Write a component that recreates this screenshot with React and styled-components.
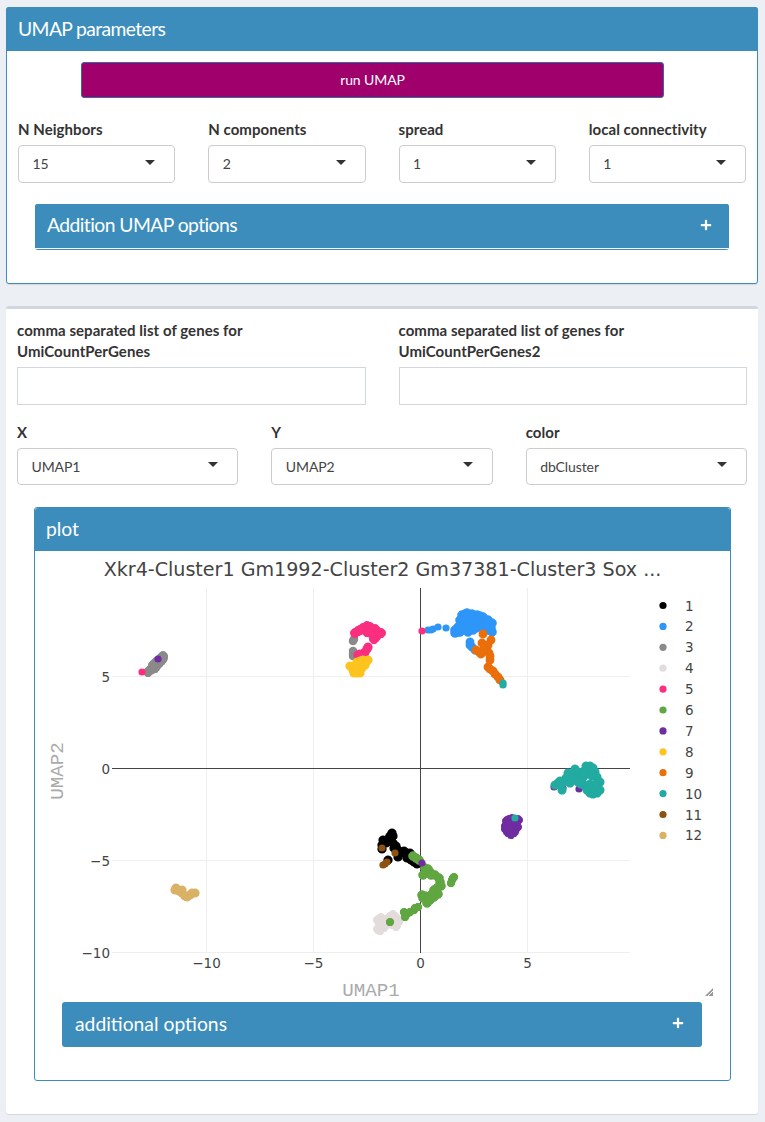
import React from "react";
import styled, { createGlobalStyle } from "styled-components";
import { FaPlus } from "react-icons/fa";

const Global = createGlobalStyle`
  html, body { margin: 0; padding: 0; background: #ecf0f5; }
  body { font-family: Lato, "Open Sans", sans-serif; color: #333; font-size: 14px; }
  * { box-sizing: border-box; }
`;

const Page = styled.div`
  width: 765px;
  height: 1122px;
  padding: 7px 7px 0 6px;
  display: flex;
  flex-direction: column;
  gap: 22px;
`;
const PrimaryBox = styled.section`
  height: 277px;
  border: 1px solid #3c8dbc;
  border-radius: 3px;
  background: #fff;
  box-shadow: 0 1px 1px rgba(0, 0, 0, 0.1);
`;
const PlainBox = styled.section`
  height: 808px;
  border-top: 3px solid #d2d6de;
  border-radius: 3px;
  background: #fff;
  box-shadow: 0 1px 1px rgba(0, 0, 0, 0.1);
  padding: 11px 11px 0 11px;
`;
const Header = styled.header`
  height: ${(p) => p.$h || 43}px;
  margin: ${(p) => (p.$flush ? "-1px -1px 0" : "0")};
  background: #3c8dbc;
  color: #fff;
  font-size: 19.3px;
  letter-spacing: ${(p) => p.$ls || 0}px;
  display: flex;
  align-items: center;
  padding: 0 12px 2px ${(p) => p.$pl || 12}px;
  border-radius: 3px 3px 0 0;
`;
const RunButton = styled.button`
  display: block;
  width: 583px;
  height: 36px;
  margin: 11px 0 0 74px;
  padding: 0 0 2px;
  background: #a0006b;
  border: 1px solid #2e6da4;
  border-radius: 3px;
  color: #fff;
  font: 14px Lato, sans-serif;
  letter-spacing: -0.1px;
`;
const FourCols = styled.div`
  display: grid;
  grid-template-columns: repeat(4, 1fr);
  column-gap: 33px;
  margin: 21px 11px 0 11px;
`;
const Cols = styled.div`
  display: grid;
  grid-template-columns: repeat(${(p) => p.$n}, 1fr);
  column-gap: 33px;
  margin-top: ${(p) => p.$mt || 0}px;
`;
const Field = styled.div`
  display: flex;
  flex-direction: column;
`;
const Label = styled.label`
  font-weight: 700;
  font-size: 15px;
  letter-spacing: 0.05px;
  line-height: 21px;
  color: #333;
  margin-bottom: 5px;
`;
const SelectBox = styled.div`
  height: ${(p) => p.$h}px;
  border: 1px solid #ccc;
  border-radius: 4px;
  background: #fff;
  color: #444;
  font-size: 14px;
  letter-spacing: -0.1px;
  display: flex;
  align-items: center;
  justify-content: space-between;
  padding: 0 19px 1px 13.5px;
`;
const Caret = styled.span`
  width: 0;
  height: 0;
  border-left: 5px solid transparent;
  border-right: 5px solid transparent;
  border-top: 5px solid #333;
  margin-top: -3px;
`;
const Collapsed = styled.div`
  margin: 21px 28px 0 28px;
  height: 46px;
  border-radius: 3px;
  background: #3c8dbc;
  overflow: hidden;
`;
const CollapsedHead = styled.div`
  height: 44px;
  background: #3c8dbc;
  color: #fff;
  font-size: 19.3px;
  letter-spacing: -0.55px;
  display: flex;
  align-items: center;
  justify-content: space-between;
  padding: 0 17px 3px 12px;
`;
const WhiteRule = styled.div`
  height: 1px;
  background: #fff;
`;
const TextInput = styled.input`
  height: 38px;
  width: 100%;
  border: 1px solid #d2d6de;
  background: #fff;
  display: block;
`;
const PlotBox = styled.div`
  margin: 22px 0 0 17px;
  width: 697px;
  height: 574px;
  border: 1px solid #3c8dbc;
  border-radius: 3px;
`;
const PlotSvg = styled.svg`
  display: block;
  width: 695px;
  height: 451px;
`;
const OptionsBar = styled.div`
  margin: 0 0 0 27px;
  width: 640px;
  height: 45px;
  border-radius: 3px;
  background: #3c8dbc;
  color: #fff;
  font-size: 19.3px;
  display: flex;
  align-items: center;
  justify-content: space-between;
  padding: 0 18px 3px 13px;
`;

const Sel = ({ value, h }) => (
  <SelectBox $h={h}>
    <span>{value}</span>
    <Caret />
  </SelectBox>
);

const COLORS = {
  1: "#000000", 2: "#2e96f8", 3: "#8b8a8a", 4: "#e4dcdc", 5: "#fb2e7f", 6: "#60a641",
  7: "#702ca0", 8: "#fdc41f", 9: "#ea6f0b", 10: "#22aba0", 11: "#8c5212", 12: "#d9b266",
};

// Scatter points in page pixels, drawn in order. The third value thickens a cluster
// by that many pixels around each point.
const POINTS = [
  [3, [[148,672],[150,670],[152,669],[155,666],[153,665],[156,662],[158,661],[160,659],[162,657],[163,656],[160,662],[157,665],[162,660],[158,664],[155,668],[163,658]], 1.4],
  [3, [[353,641],[354,639],[353,651],[353,654],[353,656]], 0.6],
  [5, [[355,633],[358,631],[363,628],[367,626],[370,627],[375,629],[381,633],[376,637],[374,639],[367,632],[372,634],[360,630],[368,630],[378,632],[372,630]], 1.4],
  [5, [[368,647],[367,649],[365,652],[364,655],[358,655],[360,654]], 1],
  [8, [[350,666],[357,662],[360,661],[363,660],[368,660],[365,665],[358,667],[357,673],[360,673],[354,673],[362,668],[356,670],[359,664],[366,662],[353,670],[355,666]], 1],
  [2, [[428,630],[431,630],[433,629],[438,627],[446,628]], 0],
  [2, [[455,633],[458,632],[455,630],[458,627],[462,624],[460,620],[462,615],[465,614],[467,613],[472,614],[477,615],[480,616],[483,617],[488,620],[492,623],[491,628],[492,632],[488,630],[484,626],[480,627],[476,622],[470,623],[466,620],[460,632],[464,628],[468,626],[473,630],[468,632],[476,628],[482,622],[472,618],[478,620],[486,625]], 1.2],
  [2, [[470,642],[470,645],[472,647],[475,650]], 0.8],
  [9, [[483,634],[482,643],[491,640],[488,645],[487,647],[486,650],[489,653],[490,656],[490,660],[476,650],[479,652],[481,654],[484,649],[488,667],[490,669],[493,671],[495,674],[498,677],[500,680]], 0.8],
  [10, [[503,683],[503,685]], 0],
  [7, [[554,787],[563,788],[579,789]], 0],
  [10, [[555,785],[558,783],[560,781],[562,790],[561,786],[566,781],[568,773],[572,775],[570,779],[575,769],[576,773],[580,776],[578,772],[574,778],[570,783],[578,782],[582,780],[584,771],[586,766],[590,766],[593,768],[595,772],[597,777],[600,782],[600,790],[597,793],[593,794],[590,793],[587,790],[585,786],[590,784],[594,788],[596,784],[592,776],[587,772],[591,771],[584,776],[581,784],[566,778]], 0.9],
  [7, [[507,821],[509,820],[512,819],[518,820],[515,824],[506,826],[508,826],[511,824],[506,829],[508,832],[511,834],[514,832],[517,827],[513,828],[510,829]], 1.4],
  [10, [[515,818]], 0],
  [1, [[392,833],[390,836],[393,836],[388,839],[383,840],[386,843],[393,843],[391,840],[382,845],[382,849],[396,846],[398,850],[402,853],[407,853],[409,856],[407,858],[411,860],[414,862],[417,864],[398,857],[388,860],[404,851],[394,848],[410,853]], 1],
  [11, [[382,848],[395,853],[383,865],[385,864],[387,862]], 0],
  [4, [[378,920],[381,918],[380,925],[378,929],[380,930],[384,927],[386,920],[393,915],[396,918],[398,922],[396,926],[390,917],[392,924]], 1.4],
  [6, [[413,856],[416,858],[419,860],[425,868],[428,869],[430,872],[423,875],[431,875],[435,875],[439,878],[440,882],[441,886],[437,888],[434,890],[438,894],[434,897],[430,900],[427,903],[423,898],[422,895],[425,896],[428,897],[432,894]], 1.2],
  [6, [[418,907],[414,910],[410,912],[406,915],[404,912],[405,917],[415,908],[408,913],[452,880],[451,883],[453,878],[454,877],[390,922]], 0.4],
  [7, [[422,863]], 0],
  [5, [[142,672],[422,631]], 0],
  [7, [[158,659]], 0],
  [12, [[176,888],[175,890],[179,891],[182,890],[182,893],[185,896],[187,897],[190,895],[192,893],[195,893]], 1],
];

const thicken = (pts, d) =>
  d === 0
    ? pts
    : pts.flatMap(([x, y]) => [[x, y], [x + d, y], [x - d, y], [x, y + d], [x, y - d]]);

const LEGEND = Object.keys(COLORS).map(Number);

const XTICKS = [[206.5, "−10"], [313.5, "−5"], [420.5, "0"], [527.5, "5"]];
const YTICKS = [[676.5, "5"], [768.5, "0"], [860.5, "−5"], [952.5, "−10"]];

const SANS = "'DejaVu Sans', Verdana, sans-serif";
const MONO = "'Liberation Mono', monospace";

const Plot = () => (
  <PlotSvg viewBox="35 551 695 451">
    <text x="382.5" y="576" textAnchor="middle" fontFamily={SANS} fontSize="19.1" fill="#444">
      Xkr4-Cluster1 Gm1992-Cluster2 Gm37381-Cluster3 Sox ...
    </text>
    {XTICKS.filter((t) => t[1] !== "0").map(([x]) => (
      <line key={x} x1={x} x2={x} y1="588" y2="953" stroke="#eee" />
    ))}
    {YTICKS.filter((t) => t[1] !== "0").map(([y]) => (
      <line key={y} x1="112" x2="630" y1={y} y2={y} stroke="#eee" />
    ))}
    <line x1="420.5" x2="420.5" y1="588" y2="953" stroke="#444" />
    <line x1="112" x2="630" y1="768.5" y2="768.5" stroke="#444" />
    {POINTS.map(([c, pts, d], i) =>
      thicken(pts, d).map(([x, y], j) => (
        <circle key={`${i}-${j}`} cx={x} cy={y} r="3.6" fill={COLORS[c]} />
      ))
    )}
    {XTICKS.map(([x, t]) => (
      <text key={t} x={x} y="968" textAnchor="middle" fontFamily={SANS} fontSize="13.5" fill="#444">{t}</text>
    ))}
    {YTICKS.map(([y, t]) => (
      <text key={t} x="110" y={y + 5} textAnchor="end" fontFamily={SANS} fontSize="13.5" fill="#444">{t}</text>
    ))}
    <text x="371" y="996" textAnchor="middle" fontFamily={MONO} fontSize="19.2" fill="#aaa">UMAP1</text>
    <text transform="translate(63 771) rotate(-90)" textAnchor="middle" fontFamily={MONO} fontSize="19.2" fill="#aaa">UMAP2</text>
    {LEGEND.map((n, i) => (
      <g key={n}>
        <circle cx="663" cy={605.5 + i * 20.9} r="3.6" fill={COLORS[n]} />
        <text x="685" y={610.5 + i * 20.9} fontFamily={SANS} fontSize="13.5" fill="#444">{n}</text>
      </g>
    ))}
    <path d="M713 988 L713 996 L705 996 Z" fill="#999" />
    <path d="M707 997 L714 990" stroke="#fff" strokeWidth="1" />
  </PlotSvg>
);

export default function App() {
  return (
    <>
      <Global />
      <Page>
        <PrimaryBox>
          <Header $flush $h={44} $ls={-0.6}>UMAP parameters</Header>
          <RunButton>run UMAP</RunButton>
          <FourCols>
            <Field><Label>N Neighbors</Label><Sel value="15" h={38} /></Field>
            <Field><Label>N components</Label><Sel value="2" h={38} /></Field>
            <Field><Label>spread</Label><Sel value="1" h={38} /></Field>
            <Field><Label>local connectivity</Label><Sel value="1" h={38} /></Field>
          </FourCols>
          <Collapsed>
            <CollapsedHead>Addition UMAP options<FaPlus size={12} /></CollapsedHead>
            <WhiteRule />
          </Collapsed>
        </PrimaryBox>
        <PlainBox>
          <Cols $n={2}>
            <Field><Label>comma separated list of genes for<br />UmiCountPerGenes</Label><TextInput /></Field>
            <Field><Label>comma separated list of genes for<br />UmiCountPerGenes2</Label><TextInput /></Field>
          </Cols>
          <Cols $n={3} $mt={17}>
            <Field><Label>X</Label><Sel value="UMAP1" h={37} /></Field>
            <Field><Label>Y</Label><Sel value="UMAP2" h={37} /></Field>
            <Field><Label>color</Label><Sel value="dbCluster" h={37} /></Field>
          </Cols>
          <PlotBox>
            <Header $h={43} $pl={11}>plot</Header>
            <Plot />
            <OptionsBar>additional options<FaPlus size={12} /></OptionsBar>
          </PlotBox>
        </PlainBox>
      </Page>
    </>
  );
}
